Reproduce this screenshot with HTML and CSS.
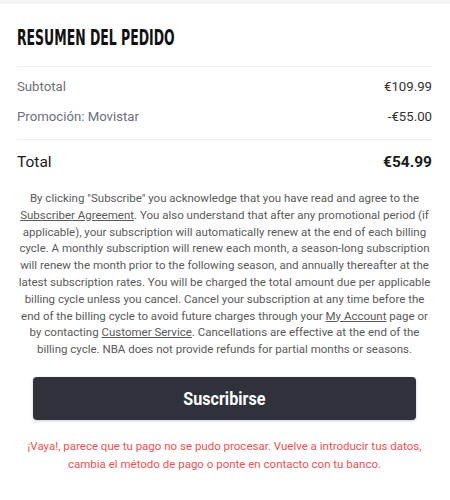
FILE: index.html
```html
<!DOCTYPE html>
<html lang="es">
<head>
<meta charset="utf-8">
<title>Resumen del pedido</title>
<link rel="stylesheet" href="styles.css">
</head>
<body>
<div class="topbar"></div>
<main class="summary">
  <h2 class="title"><span class="title-text">RESUMEN DEL PEDIDO</span></h2>
  <div class="lines">
    <div class="row"><span class="label">Subtotal</span><span class="value">€109.99</span></div>
    <div class="row"><span class="label">Promoción: Movistar</span><span class="value">-€55.00</span></div>
  </div>
  <div class="total">
    <span class="total-label">Total</span><span class="total-value">€54.99</span>
  </div>
  <p class="legal">By clicking "Subscribe" you acknowledge that you have read and agree to the <a href="#">Subscriber Agreement</a>. You also understand that after any promotional period (if applicable), your subscription will automatically renew at the end of each billing cycle. A monthly subscription will renew each month, a season-long subscription will renew the month prior to the following season, and annually thereafter at the latest subscription rates. You will be charged the total amount due per applicable billing cycle unless you cancel. Cancel your subscription at any time before the end of the billing cycle to avoid future charges through your <a href="#">My Account</a> page or by contacting <a href="#">Customer Service</a>. Cancellations are effective at the end of the billing cycle. NBA does not provide refunds for partial months or seasons.</p>
  <button class="subscribe" type="button"><span class="subscribe-text">Suscribirse</span></button>
  <p class="error">¡Vaya!, parece que tu pago no se pudo procesar. Vuelve a introducir tus datos, cambia el método de pago o ponte en contacto con tu banco.</p>
</main>
</body>
</html>
```
FILE: styles.css
```css
html, body {
  margin: 0;
  padding: 0;
  background: #fff;
  font-family: Roboto, "Liberation Sans", sans-serif;
}
.topbar {
  height: 4px;
  background: #f2f3f5;
}
.summary {
  padding: 0 18px 0 17px;
}
.title {
  margin: 0;
  padding-top: 21px;
  height: 41px;
  box-sizing: content-box;
  font-size: 21px;
  line-height: 26px;
  font-weight: 700;
  color: #111;
}
.title-text {
  display: inline-block;
  transform: scaleX(0.66);
  transform-origin: left center;
  white-space: nowrap;
  font-family: "DejaVu Sans Condensed", "DejaVu Sans", sans-serif;
}
.lines {
  border-top: 1px solid #eceef0;
  border-bottom: 1px solid #eceef0;
  padding: 10px 0 12px;
  display: flex;
  flex-direction: column;
  gap: 10px;
}
.row {
  display: flex;
  justify-content: space-between;
  font-size: 13.2px;
  line-height: 20px;
}
.label {
  color: #6e7077;
}
.value {
  color: #333;
}
.total {
  display: flex;
  justify-content: space-between;
  padding-top: 10px;
  font-size: 15.5px;
  line-height: 24px;
  color: #1a1a1a;
}
.total-value {
  font-weight: 700;
}
.legal {
  margin: 16px 0 0;
  padding: 0 1px;
  text-align: center;
  font-size: 11.5px;
  line-height: 16.8px;
  color: #5a5a5a;
}
.legal a {
  color: #5a5a5a;
  text-decoration: underline;
}
.subscribe {
  display: flex;
  align-items: center;
  justify-content: center;
  width: calc(100% - 32px);
  margin: 19px 16px 0;
  height: 43px;
  border: none;
  border-radius: 4px;
  background: #2f323a;
  box-shadow: 0 1px 3px rgba(0, 0, 0, 0.2);
  color: #fff;
  font-family: Roboto, sans-serif;
  font-size: 19px;
  font-weight: 700;
  padding: 0;
}
.subscribe-text {
  display: inline-block;
  transform: scaleX(0.85);
}
.error {
  margin: 17px 0 0;
  text-align: center;
  font-size: 11.5px;
  line-height: 18px;
  color: #f2504f;
}
```
